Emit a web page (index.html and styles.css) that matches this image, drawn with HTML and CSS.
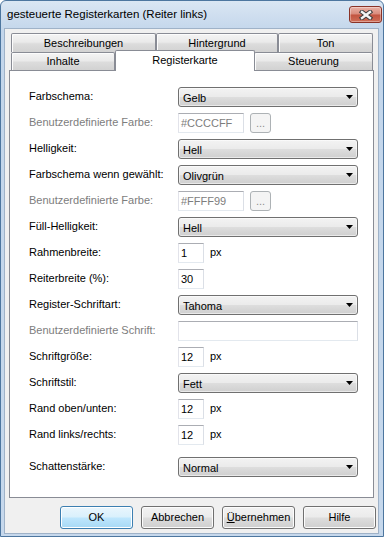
FILE: index.html
```html
<!DOCTYPE html>
<html>
<head>
	<meta charset="utf-8">
	<title>gesteuerte Registerkarten (Reiter links)</title>
	<link rel="stylesheet" href="styles.css">
</head>
<body>
	<div class="window">
		<div class="titlebar">
			<span class="title">gesteuerte Registerkarten (Reiter links)</span>
			<span class="close">
				<svg width="14" height="10" viewBox="0 0 14 10">
					<path d="M3 2 L11 8 M11 2 L3 8" stroke="#3c3c3c" stroke-width="4.4" stroke-linecap="square"/>
					<path d="M3 2 L11 8 M11 2 L3 8" stroke="#f4f4f4" stroke-width="2.4" stroke-linecap="square"/>
				</svg>
			</span>
		</div>
		<div class="client">
			<div class="tabcontrol">
				<div class="tabrow back">
					<div class="tab w-beschreibungen">Beschreibungen</div>
					<div class="tab w-hintergrund">Hintergrund</div>
					<div class="tab w-ton">Ton</div>
				</div>
				<div class="tabrow front">
					<div class="tab w-inhalte">Inhalte</div>
					<div class="tab w-registerkarte selected">Registerkarte</div>
					<div class="tab w-steuerung">Steuerung</div>
				</div>
				<div class="panel">
					<div class="row">
						<label>Farbschema:</label>
						<div class="combo">Gelb</div>
					</div>
					<div class="row">
						<label class="disabled">Benutzerdefinierte Farbe:</label>
						<div class="textbox color disabled">#CCCCFF</div>
						<div class="dots">...</div>
					</div>
					<div class="row">
						<label>Helligkeit:</label>
						<div class="combo">Hell</div>
					</div>
					<div class="row">
						<label>Farbschema wenn gewählt:</label>
						<div class="combo">Olivgrün</div>
					</div>
					<div class="row">
						<label class="disabled">Benutzerdefinierte Farbe:</label>
						<div class="textbox color disabled">#FFFF99</div>
						<div class="dots">...</div>
					</div>
					<div class="row">
						<label>Füll-Helligkeit:</label>
						<div class="combo">Hell</div>
					</div>
					<div class="row">
						<label>Rahmenbreite:</label>
						<div class="textbox small">1</div>
						<span class="unit">px</span>
					</div>
					<div class="row">
						<label>Reiterbreite (%):</label>
						<div class="textbox small">30</div>
					</div>
					<div class="row">
						<label>Register-Schriftart:</label>
						<div class="combo">Tahoma</div>
					</div>
					<div class="row">
						<label class="disabled">Benutzerdefinierte Schrift:</label>
						<div class="textbox wide"></div>
					</div>
					<div class="row">
						<label>Schriftgröße:</label>
						<div class="textbox small">12</div>
						<span class="unit">px</span>
					</div>
					<div class="row">
						<label>Schriftstil:</label>
						<div class="combo">Fett</div>
					</div>
					<div class="row">
						<label>Rand oben/unten:</label>
						<div class="textbox small">12</div>
						<span class="unit">px</span>
					</div>
					<div class="row">
						<label>Rand links/rechts:</label>
						<div class="textbox small">12</div>
						<span class="unit">px</span>
					</div>
					<div class="row spaced">
						<label>Schattenstärke:</label>
						<div class="combo">Normal</div>
					</div>
				</div>
			</div>
			<div class="buttons">
				<div class="btn default">OK</div>
				<div class="btn">Abbrechen</div>
				<div class="btn"><u>Ü</u>bernehmen</div>
				<div class="btn">Hilfe</div>
			</div>
		</div>
	</div>
</body>
</html>
```

FILE: styles.css
```css
body {
	margin: 0;
	background: #fff;
	font-family: "Liberation Sans", Arial, sans-serif;
	font-size: 11px;
	color: #000;
}
.window {
	box-sizing: border-box;
	width: 384px;
	height: 537px;
	border: 1px solid #4d769f;
	border-radius: 6px 6px 0 0;
	background: linear-gradient(#dae6f3, #c3d6eb 30px, #c6d8ec);
	padding: 0 4px 2px 3px;
	display: flex;
	flex-direction: column;
}
.titlebar {
	height: 27px;
	display: flex;
	align-items: center;
	padding-left: 3px;
	flex: none;
}
.title {
	flex: 1;
	font-size: 11.5px;
	color: #000;
	padding-bottom: 1px;
}
.close {
	box-sizing: border-box;
	align-self: flex-start;
	margin-top: 5px;
	margin-right: -3px;
	width: 33px;
	height: 17px;
	border: 1px solid #8a3327;
	border-radius: 3px;
	background: linear-gradient(#e9b2a6, #d98a7b 48%, #c2533f 52%, #cf6e58);
	box-shadow: inset 0 0 0 1px rgba(255,255,255,0.35);
	display: flex;
	align-items: center;
	justify-content: center;
}
.close svg {
	display: block;
}
.client {
	flex: 1;
	box-sizing: border-box;
	background: #f0f0f0;
	border: 1px solid #9fb2c8;
	padding: 4px 2px 0 4px;
}
.tabcontrol {
	width: 365px;
}
.tabrow {
	display: flex;
	align-items: flex-start;
	padding-left: 2px;
}
.tabrow.back {
	height: 19px;
}
.tabrow.front {
	height: 18px;
}
.tab {
	box-sizing: border-box;
	flex: none;
	border: 1px solid #898c95;
	border-bottom: none;
	border-radius: 2px 2px 0 0;
	background: linear-gradient(#f4f4f4, #eaeaea 45%, #dcdcdc 55%, #d2d2d2);
	box-shadow: inset 1px 1px 0 #fcfcfc;
	text-align: center;
	height: 19px;
	line-height: 18px;
}
.front .tab {
	height: 18px;
	line-height: 17px;
}
.front .tab.selected {
	position: relative;
	z-index: 1;
	height: 21px;
	margin-top: -2px;
	line-height: 18px;
	background: #fff;
	box-shadow: none;
}
.w-beschreibungen { width: 145px; }
.w-hintergrund { width: 122px; }
.w-ton { width: 95px; }
.w-inhalte { width: 104px; }
.w-registerkarte { width: 140px; }
.w-steuerung { width: 119px; margin-left: -1px; }

.panel {
	box-sizing: border-box;
	height: 428px;
	border: 1px solid #898c95;
	background: #fff;
	padding: 16px 15px 0 19px;
}
.row {
	display: flex;
	align-items: flex-start;
	height: 20px;
	margin-bottom: 6px;
}
.row.spaced {
	margin-top: 12px;
}
.row label {
	flex: none;
	width: 149px;
	line-height: 18px;
}
.disabled {
	color: #7d7d7d;
}
.combo {
	box-sizing: border-box;
	position: relative;
	width: 180px;
	height: 20px;
	border: 1px solid #707070;
	border-radius: 3px;
	background: linear-gradient(#f3f3f3, #ebebeb 48%, #dddddd 52%, #cfcfcf);
	box-shadow: inset 0 0 0 1px rgba(255,255,255,0.55);
	padding: 1px 0 0 4px;
	line-height: 18px;
}
.combo::after {
	content: "";
	position: absolute;
	right: 4px;
	top: 7px;
	width: 7px;
	height: 4px;
	background: #000;
	clip-path: polygon(0 0, 100% 0, 50% 100%);
}
.textbox {
	box-sizing: border-box;
	height: 20px;
	border: 1px solid;
	border-color: #abadb3 #dbdfe6 #e3e9ef #e2e3ea;
	background: #fff;
	padding-left: 2px;
	line-height: 19px;
}
.textbox.color {
	width: 66px;
}
.textbox.small {
	width: 26px;
}
.textbox.wide {
	width: 180px;
}
.dots {
	box-sizing: border-box;
	width: 21px;
	height: 20px;
	margin-left: 6px;
	border: 1px solid #adb2b5;
	border-radius: 3px;
	background: #f4f4f4;
	color: #8d8d8d;
	text-align: center;
	line-height: 18px;
}
.unit {
	margin-left: 6px;
	line-height: 18px;
}
.buttons {
	display: flex;
	justify-content: flex-end;
	gap: 8px;
	margin-top: 8px;
}
.btn {
	box-sizing: border-box;
	width: 73px;
	height: 23px;
	border: 1px solid #707070;
	border-radius: 3px;
	background: linear-gradient(#f2f2f2, #ebebeb 48%, #dddddd 52%, #cfcfcf);
	box-shadow: inset 0 0 0 1px #fcfcfc;
	text-align: center;
	line-height: 21px;
}
.btn.default {
	border-color: #3c7fb1;
	background: linear-gradient(#eaf6fd, #d9f0fc 48%, #bee6fd 52%, #a7d9f5);
	box-shadow: inset 0 0 0 1px #fff;
}
.btn u {
	text-decoration: underline;
}
```
